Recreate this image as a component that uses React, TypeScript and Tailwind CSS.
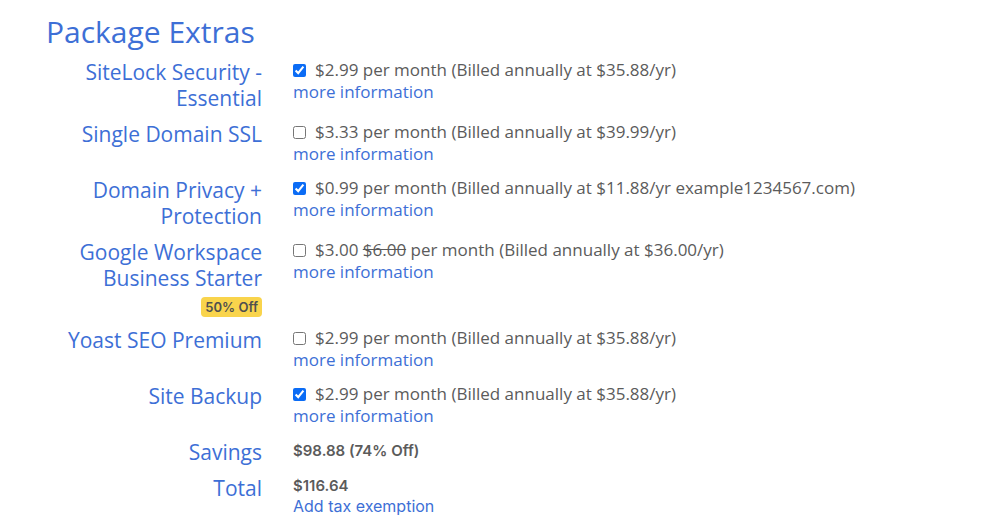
const EXTRAS: {
  label: string[];
  checked: boolean;
  price: string;
  oldPrice?: string;
  billed: string;
  badge?: string;
}[] = [
  { label: ["SiteLock Security -", "Essential"], checked: true, price: "$2.99", billed: "(Billed annually at $35.88/yr)" },
  { label: ["Single Domain SSL"], checked: false, price: "$3.33", billed: "(Billed annually at $39.99/yr)" },
  { label: ["Domain Privacy +", "Protection"], checked: true, price: "$0.99", billed: "(Billed annually at $11.88/yr example1234567.com)" },
  { label: ["Google Workspace", "Business Starter"], checked: false, price: "$3.00", oldPrice: "$6.00", billed: "(Billed annually at $36.00/yr)", badge: "50% Off" },
  { label: ["Yoast SEO Premium"], checked: false, price: "$2.99", billed: "(Billed annually at $35.88/yr)" },
  { label: ["Site Backup"], checked: true, price: "$2.99", billed: "(Billed annually at $35.88/yr)" },
];

const open = { fontFamily: '"Open Sans", "Liberation Sans", sans-serif' };
const alt = { fontFamily: 'Inter, "Liberation Sans", sans-serif' };

export default function App() {
  return (
    <div className="min-h-[528px] bg-white pl-[46px] pt-[12px]" style={open}>
      <h1 className="text-[30px] leading-[40px] text-[#3d6fd6]">Package Extras</h1>

      <div className="mt-[7px] grid grid-cols-[216px_1fr] gap-x-[31px]">
        {EXTRAS.map((x) => (
          <div key={x.label[0]} className="contents">
            <div className="flex flex-col items-end pb-[10px] text-right text-[21px] leading-[26px] text-[#3d6fd6]">
              {x.label.map((l) => (
                <span key={l}>{l}</span>
              ))}
              {x.badge && (
                <span
                  className="mt-[6px] rounded-[4px] bg-[#f9d44c] px-[4px] text-[13px] font-semibold leading-[20px] text-[#4f4f4f]"
                  style={alt}
                >
                  {x.badge}
                </span>
              )}
            </div>
            <div className="pb-[12px] text-[17px] leading-[22px]">
              <label className="flex items-center text-[#5b5b5b]">
                <input
                  type="checkbox"
                  defaultChecked={x.checked}
                  className="m-0 mr-[9px] h-[13px] w-[13px] accent-[#0b6cf5]"
                />
                <span>
                  {x.price}{" "}
                  {x.oldPrice && <span className="line-through">{x.oldPrice}</span>}
                  {x.oldPrice && " "}per month {x.billed}
                </span>
              </label>
              <a className="block text-[#3d6fd6]" href="#">
                more information
              </a>
            </div>
          </div>
        ))}

        <div className="pb-[10px] text-right text-[21px] leading-[26px] text-[#3d6fd6]">Savings</div>
        <div className="pb-[10px] pt-[2px] text-[15px] font-semibold leading-[20px] text-[#5b5b5b]" style={alt}>
          $98.88 (74% Off)
        </div>

        <div className="text-right text-[21px] leading-[26px] text-[#3d6fd6]">Total</div>
        <div className="pt-[1px] leading-[20px]" style={alt}>
          <div className="text-[15px] font-semibold text-[#5b5b5b]">$116.64</div>
          <a className="block text-[16px] text-[#3d6fd6]" href="#">
            Add tax exemption
          </a>
        </div>
      </div>
    </div>
  );
}
